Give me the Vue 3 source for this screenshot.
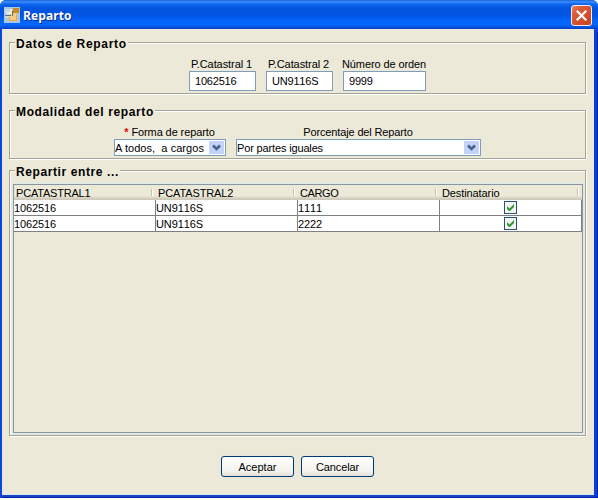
<script setup>
const fields = [
  { label: 'P.Catastral 1', value: '1062516', cls: 'short' },
  { label: 'P.Catastral 2', value: 'UN9116S', cls: 'short' },
  { label: 'Número de orden', value: '9999', cls: 'long' },
]
const columns = [
  { name: 'PCATASTRAL1', cls: 'caps' },
  { name: 'PCATASTRAL2', cls: 'caps2' },
  { name: 'CARGO', cls: 'cargo' },
  { name: 'Destinatario', cls: 'dest' },
]
const rows = [
  ['1062516', 'UN9116S', '1111'],
  ['1062516', 'UN9116S', '2222'],
]
</script>

<template>
  <div class="window">
    <header class="titlebar">
      <svg class="appicon" width="16" height="16" viewBox="0 0 16 16">
        <rect width="16" height="16" fill="#a9c6e2" />
        <rect x="1" y="2" width="7" height="9" fill="#cdd6da" />
        <rect x="6" y="6" width="7" height="8" fill="#f5cd80" />
        <path d="M5.500 10v3.500h7V7" fill="none" stroke="#e6a84a" />
        <path d="M3 6h4V2" fill="none" stroke="#e9eeee" stroke-width="2" />
        <path d="M1 8.500h6M8.500 4v5" fill="none" stroke="#5a7188" />
        <rect x="9" y="1" width="6" height="5" fill="#c98a20" />
      </svg>
      <span class="title">Reparto</span>
      <button class="close" aria-label="Cerrar">
        <svg width="21" height="21" viewBox="0 0 21 21">
          <defs>
            <linearGradient id="red" x1="0" y1="0" x2="1" y2="1">
              <stop offset="0" stop-color="#e98a70" />
              <stop offset=".25" stop-color="#dd5c3b" />
              <stop offset="1" stop-color="#c9401c" />
            </linearGradient>
          </defs>
          <rect x=".5" y=".5" width="20" height="20" rx="2.500" fill="url(#red)" stroke="#f4eef2" />
          <path d="M6.500 6.500l8 8M14.500 6.500l-8 8" stroke="#fff" stroke-width="2.200" stroke-linecap="square" />
        </svg>
      </button>
    </header>

    <main class="content">
      <section class="group data">
        <h2 class="legend l1">Datos de Reparto</h2>
        <div class="fields">
          <label v-for="f in fields" :key="f.label" class="field" :class="f.cls">
            <span class="caption"><span>{{ f.label }}</span></span>
            <span class="input">{{ f.value }}</span>
          </label>
        </div>
      </section>

      <section class="group mode">
        <h2 class="legend l2">Modalidad del reparto</h2>
        <div class="combos">
          <div class="combo-field forma">
            <span class="caption"><span><b class="req">*</b> Forma de reparto</span></span>
            <div class="combo">
              <span class="value">A todos,&nbsp; a cargos</span>
              <svg class="arrow" width="15" height="13" viewBox="0 0 15 13">
                <rect width="15" height="13" rx="1" fill="#c1d2fb" />
                <path d="M4 4.500l3.500 3.500L11 4.500" fill="none" stroke="#4a6185" stroke-width="2.600" />
              </svg>
            </div>
          </div>
          <div class="combo-field porc">
            <span class="caption"><span>Porcentaje del Reparto</span></span>
            <div class="combo">
              <span class="value">Por partes iguales</span>
              <svg class="arrow" width="15" height="13" viewBox="0 0 15 13">
                <rect width="15" height="13" rx="1" fill="#c1d2fb" />
                <path d="M4 4.500l3.500 3.500L11 4.500" fill="none" stroke="#4a6185" stroke-width="2.600" />
              </svg>
            </div>
          </div>
        </div>
      </section>

      <section class="group share">
        <h2 class="legend l3">Repartir entre ...</h2>
        <div class="table">
          <div class="row head">
            <div v-for="c in columns" :key="c.name" class="th" :class="c.cls"><span>{{ c.name }}</span></div>
          </div>
          <div v-for="(r, i) in rows" :key="i" class="row">
            <div v-for="(v, j) in r" :key="j" class="td">{{ v }}</div>
            <div class="td check">
              <svg width="13" height="13" viewBox="0 0 13 13">
                <rect x=".5" y=".5" width="12" height="12" fill="#f3f5f2" stroke="#28527a" />
                <path d="M3 5v3l2 2h1l4-4V3L5.500 7.500z" fill="#2c9a2c" />
              </svg>
            </div>
          </div>
        </div>
      </section>

      <footer class="actions">
        <button class="btn aceptar">Aceptar</button>
        <button class="btn cancelar">Cancelar</button>
      </footer>
    </main>
  </div>
</template>

<style>
body { background: #fff; }
</style>

<style scoped>
* { box-sizing: border-box; }
.window {
  width: 598px; height: 498px;
  display: flex; flex-direction: column;
  background: #0a49dc;
  border-radius: 6px 6px 0 0;
  font: 11px/13px "Liberation Sans", Arial, sans-serif;
  color: #000; overflow: hidden; white-space: nowrap;
}
button { font: inherit; margin: 0; padding: 0; }
.titlebar {
  height: 29px; flex: none; display: flex; align-items: flex-start;
  padding: 7px 6px 0 4px;
  background: linear-gradient(#1a62dc 0, #3a90fb 2px, #0f66ee 4px, #0355df 8px, #0254e4 15px, #0465fb 21px, #0466fc 25px, #0350dc 27px, #0543c4 29px);
}
.title {
  margin: 1px 0 0 3px; font: bold 12px/16px "Open Sans", "Noto Sans", sans-serif;
  color: #fff; text-shadow: 1px 1px 0 #0a2b8c; letter-spacing: .1px;
}
.close { margin: -2px 0 0 auto; width: 21px; height: 21px; border: 0; background: none; }
.close svg { display: block; }
.content {
  height: 466px; margin: 0 4px 0 2px; padding: 13px 7px 0;
  background: #ece9d8; border-bottom: 1px solid #d8e9f5;
  box-shadow: 0 2px 0 #1744c9, 0 3px 0 #001e9c, 3px 2px 0 #0b3fd1, 4px 3px 0 #001eb0;
}
.group {
  width: 577px; border: 1px solid #a4a293;
  box-shadow: inset 1px 1px 0 #fff, 1px 1px 0 #fff;
}
.data { height: 52px; }
.mode { height: 49px; margin-top: 16px; }
.share { height: 266px; margin-top: 11px; }
.legend {
  width: max-content; height: 14px; margin: -6px 0 0 5px; padding: 0 1px;
  font: bold 12px/14px "Liberation Sans", Arial, sans-serif;
  background: #ece9d8;
}
.l1 { letter-spacing: .72px; }
.l2 { letter-spacing: .63px; }
.l3 { letter-spacing: .6px; }
.fields { display: flex; gap: 10px; margin: 7px 0 0 179px; }
.short { width: 67px; }
.long { width: 83px; }
.caption { display: flex; justify-content: center; height: 13px; }
.short .caption { letter-spacing: -.08px; margin-left: -2px; }
.long .caption { letter-spacing: -.1px; margin-left: -1px; }
.input {
  display: block; height: 20px; padding: 3px 5px; background: #fff;
  border: 1px solid #7f9db9; letter-spacing: -.2px; font-kerning: none;
}
.combos { display: flex; gap: 10px; margin: 7px 0 0 104px; }
.forma { width: 112px; }
.forma .caption { letter-spacing: -.1px; margin-left: -1px; }
.porc { width: 245px; }
.porc .caption { letter-spacing: -.14px; margin-left: -1px; }
.req { color: #e00; font-weight: bold; }
.combo {
  height: 17px; padding: 1px; display: flex; justify-content: space-between;
  background: #fff; border: 1px solid #7f9db9;
}
.value { padding-top: 1px; margin-left: -1px; }
.forma .value { letter-spacing: .05px; }
.porc .value { letter-spacing: -.15px; }
.arrow { flex: none; margin: 0; }
.table {
  width: 570px; height: 249px; margin: 5px 0 0 3px;
  border: 1px solid #8796a0;
  box-shadow: 0 0 0 2px #e5e9e4;
}
.row { display: grid; grid-template-columns: repeat(4, 142px); height: 16px; background: #fff; }
.head { height: 15px; background: linear-gradient(#ece9d8 0 11px, #e2decd 12px, #d6d2c2 13px, #cbc7b8 15px); }
.th { padding: 2px 0 0 2px; display: flex; justify-content: space-between; }
.th::after { content: ""; width: 4px; height: 7px; margin-top: 2px; border-left: 1px solid #c4c1b1; box-shadow: inset 1px 0 0 #fff; }
.caps { letter-spacing: -.2px; }
.caps2 { letter-spacing: -.12px; }
.cargo { letter-spacing: -.4px; }
.dest { letter-spacing: -.1px; }
.td {
  height: 16px; padding: 2px 0 0 0; letter-spacing: -.1px; font-kerning: none;
  border-right: 1px solid #808080; border-bottom: 1px solid #808080;
}
.check { display: flex; justify-content: center; padding-top: 1px; }
.actions { display: flex; gap: 7px; margin: 20px 0 0 212px; }
.btn {
  width: 73px; height: 21px; padding-top: 1px; border: 1px solid #003c74; border-radius: 3px;
  background: linear-gradient(#fff, #f3f2ed 75%, #e2dfd4); color: #000; box-shadow: 0 0 0 1px #e3e7e0;
}
.cancelar { letter-spacing: -.1px; }
</style>
